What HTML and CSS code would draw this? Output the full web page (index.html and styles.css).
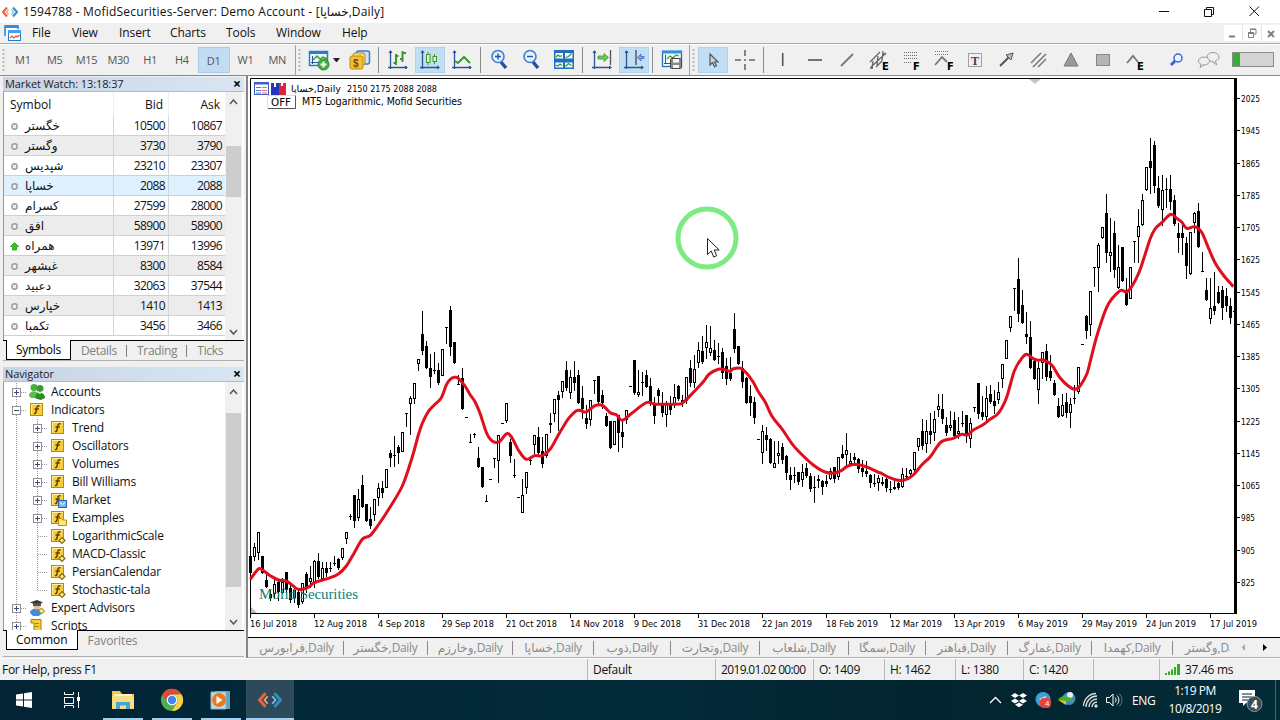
FILE: index.html
```
<!DOCTYPE html>
<html lang="en">
<head>
    <meta charset="UTF-8">
    <title>1594788 - MofidSecurities-Server: Demo Account</title>
    <link rel="stylesheet" href="styles.css">
</head>
<body>

    <!-- shared icons -->
    <svg class="defs">
        <symbol id="logo" viewBox="0 0 16 12">
            <path d="M5 1.5L1 6l4 4.5" fill="none" stroke="#e8643c" stroke-width="2"/>
            <path d="M11 1.5L15 6l-4 4.5" fill="none" stroke="#2f8fc4" stroke-width="2"/>
            <path d="M6.5 3.5L4.3 6l2.200 2.500" fill="none" stroke="#f0a080" stroke-width="1.200"/>
            <path d="M9.500 3.500L11.700 6l-2.200 2.500" fill="none" stroke="#80bde0" stroke-width="1.200"/>
        </symbol>
        <symbol id="trunk" viewBox="0 0 21 18"><path d="M10.5 0v18" class="dots"/></symbol>
        <symbol id="plus" viewBox="0 0 21 18">
            <path d="M10.5 0v18M15 9.500h6" class="dots"/>
            <rect x="6.500" y="5.500" width="8" height="8" fill="#fff" stroke="#919191"/>
            <path d="M8 9.500h5M10.500 7v5" stroke="#3c4c86"/>
        </symbol>
        <symbol id="minus" viewBox="0 0 21 18">
            <path d="M10.5 0v18M15 9.500h6" class="dots"/>
            <rect x="6.500" y="5.500" width="8" height="8" fill="#fff" stroke="#919191"/>
            <path d="M8 9.500h5" stroke="#3c4c86"/>
        </symbol>
        <symbol id="leaf" viewBox="0 0 21 18"><path d="M10.5 0v18M11 9.500h10" class="dots"/></symbol>
        <symbol id="last" viewBox="0 0 21 18"><path d="M10.5 0v9.500h10.500" class="dots"/></symbol>
        <symbol id="fx" viewBox="0 0 18 18">
            <rect x="1.500" y="2.500" width="12" height="12" fill="#f8cf3a" stroke="#b88a10"/>
            <path d="M2.500 13V3.500H13" fill="none" stroke="#ffeb9a"/>
            <path d="M10.500 5c-1.800-.8-2.400.2-2.700 1.800L7 11c-.3 1.500-1 1.800-2 1.300M5.500 8h4.300" fill="none" stroke="#5a3d00" stroke-width="1.400"/>
        </symbol>
        <symbol id="fxc" viewBox="0 0 18 18">
            <use href="#fx"/>
            <path d="M12 10.500l3 3-3 3-3-3z" fill="#ffe680" stroke="#8a6a10" stroke-width="1.200"/>
        </symbol>
        <symbol id="dot" viewBox="0 0 9 9"><circle cx="4.500" cy="4.500" r="2.700" fill="#eee" stroke="#999" stroke-width="1.400"/></symbol>
        <symbol id="up" viewBox="0 0 9 9"><path d="M4.500 .5L8.500 4.500H6.500V8H2.500V4.500H.5z" fill="#3cc21a" stroke="#2a9a10" stroke-width=".8"/></symbol>
        <symbol id="axes" viewBox="0 0 22 22">
            <path d="M3.500 2v18M1 18.500h19" stroke="#2a5496" stroke-width="1.300"/>
            <path d="M3.500 1l2 3h-4zM21 18.500l-3-2v4z" fill="#2a5496"/>
        </symbol>
    </svg>

    <div class="titlebar">
        <svg class="app-logo" width="16" height="12"><use href="#logo"/></svg>
        <span class="title">1594788 - MofidSecurities-Server: Demo Account - [خساپا,Daily]</span>
        <svg class="winbtns" width="110" height="22" fill="none" stroke="#111">
            <path d="M5 10.500h10"/>
            <path d="M50.500 8.500h7v7h-7zM52.500 8.500v-2h7v7h-2"/>
            <path d="M95.500 5.500l9.500 9.500M105 5.500L95.500 15"/>
        </svg>
    </div>

    <div class="menubar">
        <svg width="18" height="16" class="menu-icon">
            <path d="M1 11V1h13v3" fill="#fff" stroke="#1f7fd0" stroke-width="1.500"/>
            <rect x="1" y="0" width="13" height="3" fill="#2f8fe0"/>
            <rect x="4.500" y="5.500" width="12" height="10" fill="#fff" stroke="#1f7fd0"/>
            <rect x="4" y="5" width="13" height="3" fill="#4aa0e8"/>
            <path d="M6 13l2-2 2 2 2-2 1.500 1 2-2" fill="none" stroke="#e0552a" stroke-width="1.200"/>
        </svg>
        <span class="m-file">File</span>
        <span class="m-view">View</span>
        <span class="m-insert">Insert</span>
        <span class="m-charts">Charts</span>
        <span class="m-tools">Tools</span>
        <span class="m-window">Window</span>
        <span>Help</span>
        <div class="mdi">
            <svg width="18" height="16"><path d="M5 11.500h6" stroke="#808080" stroke-width="2"/></svg>
            <svg width="18" height="16" fill="none" stroke="#808080"><path d="M5.500 8.500h5v4h-5zM7.500 8v-3.500h5.500v4.500h-2M5 7.500h6M7 4h6"/></svg>
            <svg width="18" height="16"><path d="M6 6l6 6M12 6l-6 6" stroke="#808080" stroke-width="2"/></svg>
        </div>
    </div>

    <div class="toolbar">
        <div class="grip"></div>
        <div class="frames">
            <span>M1</span><span>M5</span><span>M15</span><span>M30</span><span>H1</span><span>H4</span>
            <span class="on">D1</span><span>W1</span><span>MN</span>
        </div>
        <div class="band"></div>
        <div class="grip"></div>
        <div class="tool"><svg width="22" height="22">
            <rect x="1.500" y="2.500" width="18" height="14" fill="#eaf6ff" stroke="#2a7fc0" stroke-width="1.500"/>
            <path d="M1 3.500h19" stroke="#2a7fc0" stroke-width="3"/>
            <path d="M4.500 7v8M3 13.500h13" stroke="#2a5496"/>
            <path d="M5 11l4-4 3 3 3-2 4 2" fill="none" stroke="#3aa02a" stroke-width="1.500"/>
            <circle cx="15.500" cy="15.500" r="5.500" fill="#3fae3f" stroke="#2a8a2a"/>
            <path d="M15.500 12.500v6M12.500 15.500h6" stroke="#fff" stroke-width="2"/></svg></div>
        <div class="drop"></div>
        <div class="tool"><svg width="22" height="22">
            <rect x="7.500" y="2" width="13" height="13" rx="2" fill="#cfe6fa" stroke="#2f7fc8" stroke-width="1.500"/>
            <rect x="4" y="4" width="12" height="12" rx="2" fill="#f8dc7a" stroke="#b88a1a"/>
            <rect x="1" y="7" width="13" height="13" rx="2" fill="#f4bf30" stroke="#b88a1a"/>
            <text x="4" y="18" class="coin">$</text></svg></div>
        <div class="sep"></div>
        <div class="tool"><svg width="22" height="22"><use href="#axes"/>
            <path d="M9 5v11M15.500 2v11M6.500 14H9M9 7h2.500M13 10h2.500M15.500 4H19" stroke="#3a9a2a" stroke-width="2"/></svg></div>
        <div class="tool on"><svg width="22" height="22"><use href="#axes"/>
            <path d="M9 3v13M15.500 5v10" stroke="#3a9a2a"/>
            <rect x="7.500" y="5.500" width="3.500" height="8" fill="#dff5d0" stroke="#3a9a2a"/>
            <rect x="14" y="7.500" width="3.500" height="5" fill="#dff5d0" stroke="#3a9a2a"/></svg></div>
        <div class="tool"><svg width="22" height="22"><use href="#axes"/>
            <path d="M4 12l3 2 6-6 6 6" fill="none" stroke="#3a9a2a" stroke-width="2"/></svg></div>
        <div class="sep"></div>
        <div class="tool"><svg width="22" height="22">
            <path d="M12 13l5 6" stroke="#2a4f96" stroke-width="3.500"/>
            <circle cx="9" cy="7.500" r="6" fill="#e2f1fd" stroke="#3f7fd0" stroke-width="1.600"/>
            <path d="M9 4.500v6M6 7.500h6" stroke="#2a5496" stroke-width="1.400"/></svg></div>
        <div class="tool"><svg width="22" height="22">
            <path d="M12 13l5 6" stroke="#2a4f96" stroke-width="3.500"/>
            <circle cx="9" cy="7.500" r="6" fill="#e2f1fd" stroke="#3f7fd0" stroke-width="1.600"/>
            <path d="M6 7.500h6" stroke="#2a5496" stroke-width="1.400"/></svg></div>
        <div class="tool"><svg width="22" height="22">
            <rect x="1" y="1" width="20" height="19" fill="#1f6fc0"/>
            <path d="M2.500 4h7.500v5.500H2.500zM12 4h7.500v5.500H12zM2.500 13.500h7.500v5H2.500zM12 13.500h7.500v5H12z" fill="#f2fbff"/>
            <path d="M3 8l2-2 2 1.500 2-1M12.500 8.500l3-1 3-3M3 16l2 1 2-2 2 1.500M12.500 17.500l3-3 3 2" fill="none" stroke="#3a9a2a" stroke-width="1.300"/></svg></div>
        <div class="sep"></div>
        <div class="tool"><svg width="22" height="22"><use href="#axes"/>
            <path d="M19.500 1v15" stroke="#555" stroke-width="1.300"/>
            <path d="M7 7h6V4.500L17.500 8.500 13 12.500V10H7z" fill="#6cc85a" stroke="#3a9a2a" stroke-width=".8"/></svg></div>
        <div class="tool on"><svg width="22" height="22"><use href="#axes"/>
            <path d="M13 1v15" stroke="#444" stroke-width="1.300"/>
            <path d="M21 7.500h-3V5l-3.500 3.500L18 12V9.500h3z" fill="#7aa8e8" stroke="#3a68b8" stroke-width=".8"/></svg></div>
        <div class="sep"></div>
        <div class="tool"><svg width="22" height="22">
            <rect x="1.500" y="2.500" width="19" height="15" fill="#f2fbff" stroke="#1f6fc0" stroke-width="1.300"/>
            <path d="M1 3h20" stroke="#2f8fe0" stroke-width="3"/>
            <path d="M4.500 6v9M3 14.500h6" stroke="#2a5496"/>
            <path d="M6 10l3-3 3 2 3-3 3 1" fill="none" stroke="#3a9a2a" stroke-width="1.300"/>
            <rect x="9.500" y="9.500" width="11" height="10" rx="1" fill="#8a8a8a" stroke="#444"/>
            <path d="M12 10h6v3.500h-6zM12 16h6v3h-6z" fill="#f4f4f4"/></svg></div>
        <div class="band"></div>
        <div class="grip"></div>
        <div class="tool on"><svg width="22" height="22"><path d="M8 5v11l2.500-2.300 2 4 2-1-2-3.700h3.500z" fill="#c8d4de" stroke="#555" stroke-width="1.200"/></svg></div>
        <div class="tool"><svg width="22" height="22"><path d="M11 1v6M11 15v6M1 11h6M15 11h6M10 11h2" stroke="#666" stroke-width="1.600"/></svg></div>
        <div class="sep"></div>
        <div class="tool"><svg width="22" height="22"><path d="M10.700 4v13" stroke="#555" stroke-width="1.600"/></svg></div>
        <div class="tool"><svg width="22" height="22"><path d="M4 11h14" stroke="#555" stroke-width="1.600"/></svg></div>
        <div class="tool"><svg width="22" height="22"><path d="M5 17L17 5" stroke="#777" stroke-width="1.800"/></svg></div>
        <div class="tool"><svg width="22" height="22">
            <path d="M2 13L12 3M3 18L18 4M8 18l6-6M4 20l1-8M9 16l1-9M14 12l1-10M2 19h3M15 5h3" stroke="#666" stroke-width="1.300"/>
            <text x="14" y="21" class="tag">E</text></svg></div>
        <div class="tool"><svg width="22" height="22">
            <path d="M4 3.500h14M4 6.500h14M4 9.500h14M4 13.500h8" stroke="#666" stroke-dasharray="1 1"/>
            <text x="13" y="21" class="tag">F</text></svg></div>
        <div class="tool"><svg width="22" height="22">
            <path d="M3 2.500h13M3 5.500h13" stroke="#777" stroke-dasharray="1 1"/>
            <path d="M3 16l7-8 5 5" fill="none" stroke="#777" stroke-width="1.800"/>
            <text x="15" y="21" class="tag">F</text></svg></div>
        <div class="tool"><svg width="22" height="22">
            <rect x="4.500" y="4.500" width="13" height="13" fill="none" stroke="#555" stroke-dasharray="1 1"/>
            <text x="7" y="16" class="tee">T</text></svg></div>
        <div class="tool"><svg width="22" height="22">
            <path d="M4 17l9-9" stroke="#555" stroke-width="2"/>
            <path d="M17 4l-2 7-5-5z" fill="#bbb" stroke="#555"/></svg></div>
        <div class="tool"><svg width="22" height="22"><path d="M3 14L13 4M5 18L18 5M10 18l8-8" stroke="#777" stroke-width="1.500"/></svg></div>
        <div class="tool"><svg width="22" height="22"><path d="M11 4l7 13H4z" fill="#999" stroke="#777"/></svg></div>
        <div class="tool"><svg width="22" height="22"><rect x="4.500" y="5.500" width="13" height="11" fill="#b5b5b5" stroke="#888"/></svg></div>
        <div class="tool"><svg width="22" height="22">
            <path d="M3 14l6-7 5 6" fill="none" stroke="#777" stroke-width="1.800"/>
            <text x="13" y="21" class="tag">E</text></svg></div>
        <div class="space"></div>
        <div class="tool"><svg width="22" height="22">
            <path d="M9 12l-4 4" stroke="#3a62d8" stroke-width="3"/>
            <circle cx="12" cy="9" r="4" fill="#eef4ff" stroke="#3a62d8" stroke-width="1.500"/></svg></div>
        <div class="tool"><svg width="24" height="22">
            <ellipse cx="16" cy="8" rx="6" ry="4.500" fill="#f0f0f0" stroke="#999"/>
            <path d="M18 12l2 4-5-3.500" fill="#f0f0f0" stroke="#999"/>
            <ellipse cx="7" cy="12" rx="5.500" ry="4" fill="#f0f0f0" stroke="#999"/>
            <path d="M4 15l-1 3.500 4-2.500" fill="#f0f0f0" stroke="#999"/></svg></div>
        <div class="meter"><div class="level"></div></div>
    </div>

    <div class="workspace">
        <div class="side">
            <div class="panel">
                <div class="panel-title"><span>Market Watch: 13:18:37</span><b>×</b></div>
                <div class="panel-body watch">
                    <table>
                        <thead>
                            <tr><th>Symbol</th><th>Bid</th><th>Ask</th></tr>
                        </thead>
                        <tbody>
                            <tr><td><svg><use href="#dot"/></svg>خگستر</td><td>10500</td><td>10867</td></tr>
                            <tr><td><svg><use href="#dot"/></svg>وگستر</td><td>3730</td><td>3790</td></tr>
                            <tr><td><svg><use href="#dot"/></svg>شپدیس</td><td>23210</td><td>23307</td></tr>
                            <tr class="selected"><td><svg><use href="#dot"/></svg>خساپا</td><td>2088</td><td>2088</td></tr>
                            <tr><td><svg><use href="#dot"/></svg>کسرام</td><td>27599</td><td>28000</td></tr>
                            <tr><td><svg><use href="#dot"/></svg>افق</td><td>58900</td><td>58900</td></tr>
                            <tr><td><svg><use href="#up"/></svg>همراه</td><td>13971</td><td>13996</td></tr>
                            <tr><td><svg><use href="#dot"/></svg>غبشهر</td><td>8300</td><td>8584</td></tr>
                            <tr><td><svg><use href="#dot"/></svg>دعبید</td><td>32063</td><td>37544</td></tr>
                            <tr><td><svg><use href="#dot"/></svg>خپارس</td><td>1410</td><td>1413</td></tr>
                            <tr><td><svg><use href="#dot"/></svg>تکمبا</td><td>3456</td><td>3466</td></tr>
                        </tbody>
                    </table>
                    <div class="scroll scroll-watch">
                        <svg width="9" height="6"><path d="M1 5l3.500-4L8 5"/></svg>
                        <div class="thumb"></div>
                        <svg width="9" height="6"><path d="M1 1l3.500 4L8 1"/></svg>
                    </div>
                </div>
                <div class="tabs">
                    <span class="active">Symbols</span><span>Details</span><i></i><span>Trading</span><i></i><span>Ticks</span>
                </div>
            </div>

            <div class="panel navigator">
                <div class="panel-title"><span>Navigator</span><b>×</b></div>
                <div class="panel-body nav">
                    <div class="tree">
                        <div class="row root"><svg><use href="#plus"/></svg><svg class="ico">
                            <circle cx="5" cy="4.500" r="3.500" fill="#4cae3c"/><circle cx="11" cy="5.500" r="3.500" fill="#3c9a30"/>
                            <path d="M0 13c0-6 9-6 10-1l-3 3H2z" fill="#5cbc4c"/><path d="M6 15c0-7 10-7 10 0l-4 2-4-1z" fill="#2f8a28"/>
                            <path d="M9 8l2 3 2-3" stroke="#d8f0c8" fill="none"/></svg><span>Accounts</span></div>
                        <div class="row root"><svg><use href="#minus"/></svg><svg class="ico"><use href="#fx"/></svg><span>Indicators</span></div>
                        <div class="row"><svg><use href="#trunk"/></svg><svg><use href="#plus"/></svg><svg class="ico"><use href="#fx"/></svg><span>Trend</span></div>
                        <div class="row"><svg><use href="#trunk"/></svg><svg><use href="#plus"/></svg><svg class="ico"><use href="#fx"/></svg><span>Oscillators</span></div>
                        <div class="row"><svg><use href="#trunk"/></svg><svg><use href="#plus"/></svg><svg class="ico"><use href="#fx"/></svg><span>Volumes</span></div>
                        <div class="row"><svg><use href="#trunk"/></svg><svg><use href="#plus"/></svg><svg class="ico"><use href="#fx"/></svg><span>Bill Williams</span></div>
                        <div class="row"><svg><use href="#trunk"/></svg><svg><use href="#plus"/></svg><svg class="ico"><use href="#fx"/>
                            <rect x="8.500" y="9.500" width="8" height="7" fill="#7ab8f0" stroke="#2468b8"/><path d="M10 11.500l2.500 2 2.500-2" fill="none" stroke="#fff"/></svg><span>Market</span></div>
                        <div class="row"><svg><use href="#trunk"/></svg><svg><use href="#plus"/></svg><svg class="ico"><use href="#fx"/>
                            <path d="M8.500 16.500v-7h3l1 1.500h4v5.500z" fill="#ffe680" stroke="#b8921a"/></svg><span>Examples</span></div>
                        <div class="row"><svg><use href="#trunk"/></svg><svg><use href="#leaf"/></svg><svg class="ico"><use href="#fxc"/></svg><span>LogarithmicScale</span></div>
                        <div class="row"><svg><use href="#trunk"/></svg><svg><use href="#leaf"/></svg><svg class="ico"><use href="#fxc"/></svg><span>MACD-Classic</span></div>
                        <div class="row"><svg><use href="#trunk"/></svg><svg><use href="#leaf"/></svg><svg class="ico"><use href="#fxc"/></svg><span>PersianCalendar</span></div>
                        <div class="row"><svg><use href="#trunk"/></svg><svg><use href="#last"/></svg><svg class="ico"><use href="#fxc"/></svg><span>Stochastic-tala</span></div>
                        <div class="row root"><svg><use href="#plus"/></svg><svg class="ico">
                            <path d="M1 14c0-6 12-6 12 0l-3 3H4z" fill="#3f8fd8"/><circle cx="8" cy="7" r="3.500" fill="#e8c090"/>
                            <path d="M1 3.500L8 1l6 2.500L8 6z" fill="#333"/><path d="M4 4h8v3H4z" fill="#555"/>
                            <path d="M12.500 9l3 3-3 3-3-3z" fill="#ffe680" stroke="#8a6a10"/></svg><span>Expert Advisors</span></div>
                        <div class="row root"><svg><use href="#plus"/></svg><svg class="ico">
                            <path d="M2 2.500h10v10l3 2.500H5V6H2z" fill="#f8cf3a" stroke="#a87f10"/><path d="M6 6.500h4M6 9.500h4" stroke="#a87f10"/></svg><span>Scripts</span></div>
                    </div>
                    <div class="scroll scroll-nav">
                        <svg width="9" height="6"><path d="M1 5l3.500-4L8 5"/></svg>
                        <div class="thumb"></div>
                        <svg width="9" height="6"><path d="M1 1l3.500 4L8 1"/></svg>
                    </div>
                </div>
                <div class="tabs">
                    <span class="active common">Common</span><span>Favorites</span>
                </div>
            </div>
        </div>

        <div class="main">
            <svg id="chart" width="1032" height="560" viewBox="248 77 1032 560">
                <path d="M250.500 613V78.500H1237" class="frame"/>
                <path d="M250 613.500H1236" class="frame"/>
                <rect x="1234" y="79" width="3" height="535"/>
                <path d="M1029 79h12l-6 5z" fill="#c4c4c4"/>
                <path d="M251 607v6h6z" fill="#bbb"/>
                <g id="bars"></g>
                <text x="259" y="599" class="mark" textLength="99">Mofid Securities</text>
                <path id="average"/>
                <g id="scale"></g>

                <rect x="254.500" y="82.500" width="14" height="12" fill="#fff" stroke="#3f5fc0"/>
                <path d="M254 83.500h15" stroke="#3f5fc0" stroke-width="2"/>
                <path d="M256 87.500h5M256 90.500h5M256 93h5" stroke="#5878d0"/><path d="M262 87.500h5M262 90.500h5M262 93h5" stroke="#e07080"/>
                <path d="M271 83h3v4h2v-4h3v12h-8z" fill="#2038c0"/><path d="M279 83h2v3h2v-3h3v12h-7z" fill="#d82838"/>
                <text x="291" y="92" class="head" textLength="50" lengthAdjust="spacingAndGlyphs">خساپا,Daily</text>
                <text x="347" y="92" class="head" textLength="90" lengthAdjust="spacingAndGlyphs">2150 2175 2088 2088</text>
                <path d="M267.500 108.500v-13h28" stroke="#ddd" fill="none"/>
                <path d="M268 108.500h27.500v-13" stroke="#555" fill="none"/>
                <text x="271" y="106" class="note" textLength="20" lengthAdjust="spacingAndGlyphs">OFF</text>
                <text x="302" y="105" class="note" textLength="160" lengthAdjust="spacingAndGlyphs">MT5 Logarithmic, Mofid Securities</text>

                <circle cx="707" cy="238" r="29" class="click"/>
                <path d="M707.500 238.500v16l3.700-3.500 2.500 6 3-1.300-2.500-5.700h5z" fill="#fff" stroke="#222"/>
            </svg>
            <div class="chart-tabs">
                <span>فرابورس,Daily</span><span>خگستر,Daily</span><span>وخارزم,Daily</span><span>خساپا,Daily</span>
                <span>ذوب,Daily</span><span>وتجارت,Daily</span><span>شلعاب,Daily</span><span>سمگا,Daily</span>
                <span>فباهنر,Daily</span><span>غمارگ,Daily</span><span>کهمدا,Daily</span><span class="cut">وگستر,Daily</span>
                <svg width="48" height="18"><path d="M15 5v7l-3.500-3.500z" fill="#aaa"/><path d="M33 5v7l4-3.500z"/></svg>
            </div>
        </div>
    </div>

    <div class="status">
        <span>For Help, press F1</span>
        <span>Default</span>
        <span class="time">2019.01.02 00:00</span>
        <span>O: 1409</span>
        <span>H: 1462</span>
        <span>L: 1380</span>
        <span>C: 1420</span>
        <span></span>
        <span class="ping"><svg width="16" height="12" fill="#2fae1a"><path d="M0 9h2v2H0zM3 7.500h2V11H3zM6 5.500h2V11H6zM9 3h2v8H9zM12 0h3v11h-3z"/></svg>37.46 ms</span>
    </div>

    <div class="taskbar">
        <div class="app"><svg width="16" height="16" fill="#fff"><path d="M0 2.500L7 1.500V7.500H0zM8 1.300L16 0v7.500H8zM0 8.500h7v6L0 13.500zM8 8.500h8V16l-8-1.200z"/></svg></div>
        <div class="app"><svg width="18" height="16" fill="none" stroke="#fff"><path d="M1.500 0v2.500h9V0M1.500 5.500h9v6h-9zM1.500 16v-2.500h9V16M15.500 0v16"/><path d="M14 5h3v4h-3z" fill="#fff" stroke="none"/></svg></div>
        <div class="app run first"><svg width="22" height="20">
            <path d="M0 1h8l2 3h12v14H0z" fill="#f4c64e"/><path d="M2 4h18v3H2z" fill="#fff3c0"/><path d="M0 6h22v13H0z" fill="#fbdc84"/>
            <path d="M4 19v-7h14v7h-4v-3.500H8V19z" fill="#3fa8d8"/></svg></div>
        <div class="app run"><svg width="24" height="24" viewBox="-12 -12 24 24">
            <circle r="11" fill="#4caf50"/>
            <path d="M-9.600-5.500A11 11 0 0 1 9.600-5.500H0A5.500 5.500 0 0 0-4.800 2.800z" fill="#e04a3a"/>
            <path d="M9.600-5.500A11 11 0 0 1 0 11L4.800 2.800A5.500 5.500 0 0 0 0-5.500z" fill="#fcd03c"/>
            <circle r="5.300" fill="#fff"/><circle r="4.200" fill="#4285f4"/></svg></div>
        <div class="app run"><svg width="22" height="20">
            <path d="M5 1h15v18H5z" fill="#5fa4c8"/><path d="M1 2h15v17H1z" fill="#bcdcea" stroke="#7fb4cc"/>
            <circle cx="9" cy="10" r="7" fill="#e87a22"/><path d="M6.500 6v8l6-4z" fill="#fff"/></svg></div>
        <div class="app run current"><svg width="24" height="18"><use href="#logo"/></svg></div>
        <div class="tray">
            <svg width="24" height="20"><path d="M7 13l5.500-5.500L18 13" fill="none" stroke="#fff" stroke-width="1.300"/></svg>
            <svg width="24" height="20" fill="#fff"><path d="M8 3l4 2.500-4 2.500-4-2.500zM16 3l4 2.500-4 2.500-4-2.500zM8 8.500l4 2.500-4 2.500L4 11zM16 8.500l4 2.500-4 2.500-4-2.500zM12 12.500l4 2.300-4 2.400-4-2.400z"/></svg>
            <svg width="24" height="20"><circle cx="12" cy="9.500" r="7.500" fill="#3f9fd8"/><path d="M8 9l7-3-2 7" fill="#d8ecf8"/><rect x="9" y="8" width="11" height="10" rx="4" fill="#e8403a"/><text x="14" y="16" class="badge">4</text></svg>
            <svg width="24" height="20"><circle cx="14" cy="8.500" r="6.500" fill="#3f88d0"/><circle cx="15" cy="5" r="3" fill="#e8f0f4"/><path d="M3 9l8-5v3c5 0 8 2 8 6-3-2-5-2-8-1v3z" fill="#48b030"/><path d="M3 10l8 5v-4z" fill="#e8c020"/></svg>
            <svg width="24" height="20" fill="none" stroke="#ddd" stroke-width="1.300"><path d="M7 17A11 11 0 0 1 18 6M10 17a8 8 0 0 1 8-8M13 17a5 5 0 0 1 5-5M4.500 16A13 13 0 0 1 17 3.500"/><circle cx="17" cy="16" r="1" fill="#ddd"/></svg>
            <svg width="24" height="20" fill="none" stroke="#fff"><path d="M3.500 7.500h3l3.500-3.500v12l-3.500-3.500h-3zM12 7.500c1.500 1.500 1.500 3.500 0 5M14 5.500c2.500 2.500 2.500 6.500 0 9"/><path d="M16 3.500c4 4 4 9 0 13" stroke="#5a7582"/></svg>
            <span class="lang">ENG</span>
            <span class="clock">1:19 PM<br>10/8/2019</span>
            <svg width="30" height="30"><path d="M3 5h16v13h-9l-3 3v-3H3z" fill="#fff"/><path d="M6 9h10M6 12h10M6 15h6" stroke="#02202c"/>
                <circle cx="18.500" cy="19" r="7.500" fill="#3a4d57" stroke="#8a979e"/><text x="18.500" y="23.500" class="count">4</text></svg>
            <div class="peek"></div>
        </div>
    </div>

    <script>
        // Each bar: type (f = filled, h = hollow), high, body top, body bottom, low.
        // Values are in thirds of a pixel below the section's base line.
        const sections = [
            { base: 280, bars: `f 828 828 880 880,h 790 800 828 840,h 755 755 815 838,f 828 828 880 880,f 885 900 922 922,
                f 930 942 955 960,h 900 912 940 955,f 900 905 935 960,h 895 905 935 940,f 877 877 930 935,
                f 905 925 960 965,h 925 930 950 965,f 930 935 975 980,h 908 910 962 968,f 877 882 925 935,
                h 858 895 902 920,h 840 842 905 922,f 820 842 892 895,h 845 865 895 900,f 845 865 880 888,
                f 845 864 864 872,f 828 848 848 855,f 835 838 865 868,h 805 805 830 838,h 757 757 773 790,
                f 703 708 708 718,f 645 645 722 742,h 628 658 712 720,f 585 615 680 680,f 672 672 722 722,
                f 680 717 738 745,h 657 657 703 720,h 610 625 650 675,f 603 623 640 652,h 568 568 622 622,
                f 510 518 535 558,f 468 526 529 557,f 495 502 520 548,h 455 455 512 512,f 398 398 398 437,
                h 348 355 368 462,h 310 310 355 368,h 238 238 248 270,f 93 162 212 222,f 182 198 265 265,
                f 222 265 290 320,f 215 270 273 280,f 250 270 310 312,h 208 208 286 286,f 140 140 140 190,
                f 78 90 200 225,f 187 187 250 250,f 285 312 312 312,f 263 295 388 388,f 412 412 412 412,
                f 463 487 487 487,f 460 463 466 470,f 500 535 560 560,f 560 560 622 622,f 645 663 663 663,
                f 598 598 598 598,f 535 535 535 562,h 465 465 540 605,f 430 430 430 430,h 370 370 420 425,
                f 478 485 527 545,f 538 585 588 590,f 652 652 652 652,h 598 645 697 697,h 577 577 622 640,
                f 530 540 540 552,h 465 465 493 520,f 440 470 520 525,f 470 512 552 560,h 463 463 525 532,
                f 400 430 436 455,h 358 358 400 422,f 333 345 360 450,h 303 303 332 350,f 242 270 325 330,
                h 270 292 335 355,f 242 290 308 330,f 270 285 370 370,f 318 355 388 415,f 375 413 433 445,
                h 360 360 418 435,f 300 300 300 340,f 288 288 365 375,f 330 345 370 385,f 400 408 437 437,
                f 423 423 503 503,h 423 423 493 493,f 405 405 458 512,f 422 457 470 500,h 390 390 418 430,
                f 319 319 319 319,f 240 240 340 343,h 270 335 343 348,f 275 306 310 345,f 270 285 320 320,
                f 295 318 372 375,f 350 372 407 428,f 325 330 348 365,f 337 375 398 408,h 363 372 403 437,
                f 347 372 390 403,h 312 352 368 380,f 315 318 358 360,f 345 360 368 378,h 290 290 360 368,
                f 240 265 308 318,h 225 268 307 322,h 187 210 245 260,f 168 213 245 248,h 135 187 200 235,
                h 138 205 215 225,f 180 210 240 240,f 190 229 229 250,f 205 217 278 295,f 235 258 297 312,
                f 232 278 297 300,f 100 148 207 215,f 198 198 253 253,f 243 265 305 320,f 290 295 368 370,
                f 315 348 368 405,f 352 367 413 428,f 478 478 478 478,h 435 453 515 548,f 440 465 480 510,
                f 475 477 548 548,h 482 550 560 560,h 482 518 525 550,f 488 502 540 550,f 525 528 580 598,
                f 560 585 600 628,f 560 586 586 605,f 575 577 607 612,h 553 575 597 618,f 550 563 587 590,
                f 580 587 628 632,f 587 621 621 665,f 585 598 602 622,f 600 602 622 643,f 585 603 613 618,
                h 565 572 595 598,f 560 562 598 605,h 532 532 588 598,f 495 523 533 535,h 458 510 523 555,
                h 518 542 550 552,f 520 532 540 550,f 535 538 568 575,f 540 565 575 587,f 542 573 583 587,
                f 583 585 610 622,f 582 610 610 618,h 585 595 605 630,f 590 605 611 615,f 590 597 623 633,
                f 603 628 628 635,f 600 622 626 628,f 605 610 625 628` },
            { base: 400, bars: `h 205 223 257 260,f 205 228 232 235,h 208 210 218 228,h 157 157 208 215,h 115 115 137 150,
                f 57 93 138 148,h 60 93 130 155,f 40 93 105 128,h 32 57 95 120` },
            { base: 110, bars: `h 852 888 898 918,f 852 897 927 940,f 920 945 968 975,h 903 946 952 960,f 905 930 978 985,
                h 922 963 970 985,f 903 940 943 948,f 915 915 978 995,h 925 940 985 1011,f 890 890 890 903,
                f 820 820 913 925,f 857 905 922 928,h 828 865 917 930,f 825 853 875 880,f 840 873 887 908,
                h 817 845 867 880,h 763 763 805 830,h 690 690 745 745,h 618 618 650 662,f 535 535 535 600,
                f 443 507 613 632,f 540 585 638 638,f 605 673 680 700,f 633 682 773 773,f 745 752 808 808,
                h 755 773 837 880,h 727 727 755 803,f 703 723 800 810,f 735 783 803 810,f 810 820 855 855,
                f 865 888 922 922,h 852 885 915 918,f 850 877 910 920,h 865 882 907 952,f 825 864 868 878,
                h 772 772 842 850,f 703 703 703 703,f 615 618 662 685,h 542 542 643 675,f 470 470 470 527,
                h 400 405 470 542,h 352 352 380 383,f 252 310 430 455,h 325 425 435 483,f 333 370 480 500,
                h 405 470 530 533,f 410 412 512 512,f 503 540 585 585,h 470 470 563 565,f 392 392 392 455,
                h 298 347 377 455,h 253 270 343 345,h 172 172 238 240,f 83 153 175 250,f 93 105 227 245,
                f 198 233 287 290,h 195 240 298 345,f 203 238 241 290,f 195 237 275 298,f 255 270 343 345,
                f 340 370 385 425,f 340 370 383 433,f 380 400 467 503,h 365 367 490 492,h 305 310 335 365,
                f 280 303 410 410,f 425 482 482 482,f 505 540 570 570,h 505 595 625 638,f 487 588 602 613,
                f 528 545 578 580,f 528 540 595 628,f 535 558 588 602,f 565 588 623 638,f 603 603 603 603` }
        ];

        // Moving average: x, y pairs, same thirds unit, from each section's origin.
        const average = [
            { x: 245, y: 280, points: `16 898 40 867 52 870 76 887 100 900 124 903 145 918 160 928 190 922 208 908 250 895 280 882
                304 858 328 818 352 778 376 766 400 735 436 680 472 618 496 550 508 510 520 465 532 430 550 395 568 375
                588 355 604 315 616 298 628 292 640 295 660 318 676 345 690 365 705 400 725 460 738 480 750 487 765 484
                785 461 800 472 822 513 844 538 868 527 892 527 916 507 940 465 964 425` },
            { x: 570, y: 280, points: `0 410 18 393 30 391 49 396 73 378 97 376 121 398 140 405 157 421 185 400 229 368 253 372
                289 373 325 372 340 367 375 332 400 305 418 282 445 268 465 269 481 274 490 266 512 265 530 280 550 307
                566 337 585 365 607 410 637 448 665 490 690 518 730 555 765 576 793 579 815 571 830 560 855 553 890 561
                925 577` },
            { x: 880, y: 400, points: `0 218 30 233 55 241 79 238 100 225 125 195 151 170 183 126 220 115` },
            { x: 880, y: 110, points: `245 973 263 975 280 960 308 945 330 928 350 915 365 895 380 862 392 820 403 783 420 752
                439 733 460 746 475 751 490 750 515 765 540 803 565 828 585 838 600 828 620 793 633 745 647 690 665 632
                680 592 697 565 722 541 740 546 755 530 775 492 790 450 810 388 825 357 845 338 872 313 890 325 905 336
                920 355 945 350 965 367 985 413 1005 458 1030 495 1060 530` }
        ];

        const dates = ['16 Jul 2018', '12 Aug 2018', '4 Sep 2018', '29 Sep 2018', '21 Oct 2018', '14 Nov 2018', '9 Dec 2018',
            '31 Dec 2018', '22 Jan 2019', '18 Feb 2019', '12 Mar 2019', '13 Apr 2019', '6 May 2019', '29 May 2019',
            '24 Jun 2019', '17 Jul 2019'];
        const dateWidths = [47, 53, 47, 52, 51, 54, 47, 52, 50, 52, 52, 51, 50, 55, 50, 47];

        function drawBars() {
            let x = 250;
            let html = '';
            sections.forEach(section => {
                section.bars.split(',').forEach(bar => {
                    const [type, ...v] = bar.trim().split(' ');
                    const [high, top, bottom, low] = v.map(n => Math.round(section.base + n / 3));
                    html += `<rect x="${x}" y="${high}" width="1" height="${low - high + 1}"/>`;
                    if (type === 'h') {
                        html += `<rect x="${x - 0.5}" y="${top + 0.5}" width="2" height="${Math.max(bottom - top, 2)}" class="hollow"/>`;
                    } else {
                        html += `<rect x="${x - 1}" y="${top}" width="3" height="${Math.max(bottom - top, 1)}"/>`;
                    }
                    x += 4;
                });
            });
            document.getElementById('bars').innerHTML = html;
        }

        function drawAverage() {
            const p = [];
            average.forEach(part => {
                const n = part.points.trim().split(/\s+/).map(Number);
                for (let i = 0; i < n.length; i += 2) {
                    p.push([part.x + n[i] / 3, part.y + n[i + 1] / 3]);
                }
            });
            // smooth the line through its points
            let d = `M${p[0][0].toFixed(1)} ${p[0][1].toFixed(1)}`;
            for (let i = 0; i < p.length - 1; i++) {
                const a = p[i - 1] || p[i];
                const b = p[i];
                const c = p[i + 1];
                const e = p[i + 2] || c;
                const curve = [
                    b[0] + (c[0] - a[0]) / 6, b[1] + (c[1] - a[1]) / 6,
                    c[0] - (e[0] - b[0]) / 6, c[1] - (e[1] - b[1]) / 6,
                    c[0], c[1]
                ];
                d += 'C' + curve.map(v => v.toFixed(1)).join(' ');
            }
            document.getElementById('average').setAttribute('d', d);
        }

        function drawScale() {
            let html = '';
            for (let i = 0; i <= 15; i++) {
                const y = Math.round(98 + i * 32.25);
                const price = 2025 - i * 80;
                html += `<rect x="1237" y="${y}" width="3" height="1"/>`;
                html += `<text x="1241" y="${y + 4}" textLength="${price > 999 ? 19 : 14}" lengthAdjust="spacingAndGlyphs">${price}</text>`;
            }
            dates.forEach((date, i) => {
                const x = 250 + i * 64;
                html += `<rect x="${x}" y="614" width="1" height="4"/>`;
                html += `<text x="${x}" y="627" textLength="${dateWidths[i]}" lengthAdjust="spacingAndGlyphs">${date}</text>`;
            });
            document.getElementById('scale').innerHTML = html;
        }

        drawBars();
        drawAverage();
        drawScale();
    </script>

</body>
</html>
```
FILE: styles.css
```
* {
    box-sizing: border-box;
}
body {
    margin: 0;
    width: 1280px;
    height: 720px;
    overflow: hidden;
    display: flex;
    flex-direction: column;
    background-color: #f0f0f0;
    color: #111;
    font-family: "Open Sans", "DejaVu Sans", sans-serif;
    font-size: 12px;
    white-space: nowrap;
}
svg {
    display: block;
    flex: none;
}
.defs {
    position: absolute;
    width: 0;
    height: 0;
}
.dots {
    fill: none;
    stroke: #999;
    stroke-dasharray: 1 1;
}

/* title and menu */
.titlebar {
    height: 23px;
    background-color: #fff;
    display: flex;
    align-items: center;
    padding-left: 2px;
}
.title {
    margin-left: 5px;
    letter-spacing: 0.2px;
}
.winbtns {
    margin-left: auto;
    margin-right: 16px;
}
.menubar {
    height: 21px;
    display: flex;
    align-items: center;
    padding-left: 4px;
    padding-bottom: 1px;
    border-bottom: 1px solid #a8a8a8;
    letter-spacing: -0.1px;
}
.menu-icon {
    margin-right: 10px;
}
.m-file { width: 40px; }
.m-view { width: 47px; }
.m-insert { width: 51px; }
.m-charts { width: 56px; }
.m-tools { width: 50px; }
.m-window { width: 66px; }
.mdi {
    margin-left: auto;
    display: flex;
    gap: 1px;
    background-color: #e4e4e4;
}
.mdi svg {
    background-color: #fff;
}

/* toolbar */
.toolbar {
    height: 32px;
    display: flex;
    align-items: center;
    padding-bottom: 1px;
    border-top: 1px solid #fff;
    border-bottom: 1px solid #8a8a8a;
}
.grip {
    width: 3px;
    height: 24px;
    margin: 0 2px;
    background-image: radial-gradient(circle, #b4b4b4 1px, transparent 1.2px);
    background-size: 3px 4px;
}
.frames {
    display: flex;
    width: 287px;
}
.frames span {
    width: 31.8px;
    height: 26px;
    line-height: 26px;
    text-align: center;
    font-size: 11px;
    letter-spacing: -0.3px;
    color: #555;
}
.frames .on {
    background-color: #c2dcf2;
    border: 1px solid #a8cdec;
    line-height: 26px;
}
.band {
    width: 1px;
    height: 30px;
    background-color: #a0a0a0;
    margin-left: 1px;
}
.tool {
    width: 32px;
    height: 26px;
    display: flex;
    align-items: center;
    justify-content: center;
    border: 1px solid transparent;
}
.tool.on {
    width: 30px;
    margin: 0 1px;
    background-color: #c2def4;
    border-color: #b0d4f0;
}
.drop {
    width: 7px;
    margin: 0 4px 0 -2px;
    border: 3.5px solid transparent;
    border-top: 4px solid #222;
    border-bottom: 0;
}
.sep {
    width: 1px;
    height: 26px;
    margin: 0 3px 0 2px;
    background-color: #8c8c8c;
}
.space {
    width: 10px;
}
.coin {
    font: bold 10px "Liberation Sans", sans-serif;
    fill: #7a4a00;
}
.tag {
    font: bold 10px "DejaVu Sans", sans-serif;
    fill: #000;
}
.tee {
    font: bold 12px "Liberation Serif", serif;
    fill: #444;
}
.meter {
    width: 42px;
    height: 15px;
    margin-left: 7px;
    border: 1px solid #8a8a8a;
    background-color: #d4d4d4;
}
.level {
    width: 7px;
    height: 13px;
    background-color: #35b035;
}

/* side panels */
.workspace {
    display: flex;
    height: 582px;
}
.side {
    width: 248px;
    border-right: 2px solid #868686;
    padding: 1px 3px 0 3px;
}
.panel {
    width: 241px;
    height: 284px;
    border-bottom: 1px solid #b0b0b0;
}
.panel-title {
    height: 14px;
    display: flex;
    align-items: center;
    justify-content: space-between;
    padding: 0 3px 0 2px;
    background: linear-gradient(90deg, #c8d4e4, #d8e6f4);
    font-size: 11px;
    line-height: 14px;
    color: #222;
    letter-spacing: -0.1px;
}
.panel-title b {
    font-size: 14px;
    color: #000;
}
.panel-body {
    display: flex;
    border-left: 1px solid #999;
    border-top: 1px solid #b8b8b8;
    background-color: #fff;
    overflow: hidden;
}
.watch {
    height: 249px;
}
table {
    align-self: flex-start;
    width: 221px;
    border-collapse: separate;
    border-spacing: 0;
    table-layout: fixed;
}
th {
    height: 24px;
    padding: 0 5px 0 0;
    font-weight: 400;
    text-align: right;
    border-right: 1px solid #eee;
}
th:first-child {
    width: 110px;
    padding-left: 6px;
    text-align: left;
}
th:nth-child(2) {
    width: 55px;
}
td {
    height: 20px;
    padding: 0 3px 0 0;
    text-align: right;
    line-height: 19px;
    letter-spacing: -0.6px;
    border-right: 1px solid #d4d4d4;
    border-bottom: 1px solid #d0d0d0;
}
td:first-child {
    padding-left: 6px;
    text-align: left;
    letter-spacing: 0;
}
td:last-child, th:last-child {
    border-right: 0;
}
td svg {
    display: inline-block;
    width: 9px;
    height: 9px;
    margin-right: 6px;
    vertical-align: -1px;
}
tbody tr:nth-child(even) {
    background-color: #ececec;
}
tbody tr.selected {
    background-color: #dff0ff;
}
.scroll {
    width: 17px;
    display: flex;
    flex-direction: column;
    align-items: center;
    background-color: #f0f0f0;
    padding: 7px 0 5px;
}
.scroll path {
    fill: none;
    stroke: #555;
    stroke-width: 1.5;
}
.thumb {
    width: 15px;
    background-color: #cdcdcd;
}
.scroll svg:last-child {
    margin-top: auto;
}
.scroll-watch .thumb {
    height: 51px;
    margin-top: 41px;
}
.scroll-nav .thumb {
    height: 174px;
    margin-top: 18px;
}
.tabs {
    height: 20px;
    display: flex;
    align-items: flex-start;
    border-top: 1px solid #000;
    padding-left: 3px;
    color: #808080;
    line-height: 19px;
    letter-spacing: -0.3px;
}
.tabs span {
    padding: 0 9px 0 10px;
}
.tabs .active {
    height: 20px;
    margin-top: -1px;
    padding: 0 9px;
    border: 1px solid #000;
    border-top: 0;
    background-color: #fff;
    color: #000;
    line-height: 20px;
}
.tabs i {
    width: 1px;
    height: 12px;
    margin-top: 4px;
    background-color: #808080;
}
.navigator {
    margin-top: 6px;
    height: 290px;
}
.nav {
    height: 249px;
}
.navigator .tabs .active {
    letter-spacing: 0;
}
.navigator .tabs {
    letter-spacing: -0.1px;
}
.tree {
    width: 221px;
    padding-top: 1px;
}
.row {
    height: 18px;
    display: flex;
    align-items: center;
    padding-left: 2px;
    line-height: 18px;
    letter-spacing: -0.2px;
}
.row svg {
    width: 21px;
    height: 18px;
}
.row .ico {
    width: 18px;
    margin: 0 4px 0 2px;
}

/* chart */
.main {
    width: 1032px;
    padding-top: 1px;
    background-color: #fff;
}
.frame {
    fill: none;
    stroke: #000;
}
.hollow {
    fill: #fff;
    stroke: #000;
}
#average {
    fill: none;
    stroke: #e00f1e;
    stroke-width: 3;
    stroke-linejoin: round;
}
#scale text, .head {
    font-family: "DejaVu Sans", sans-serif;
    font-size: 9px;
}
.mark {
    font-family: "Liberation Serif", serif;
    font-size: 15px;
    fill: #10807c;
}
.note {
    font-family: "DejaVu Sans", sans-serif;
    font-size: 10px;
}
.click {
    fill: none;
    stroke: #7eea84;
    stroke-width: 5;
}
.chart-tabs {
    height: 21px;
    display: grid;
    grid-template-columns: 94px 84px 85px 81px 77px 89px 89px 77px 82px 84px 81px 57px 48px;
    padding-left: 2px;
    border-top: 1px solid #000;
    border-bottom: 1px solid #b0b0b0;
    background-color: #f0f0f0;
    color: #8a8a8a;
    align-items: center;
}
.chart-tabs span {
    height: 14px;
    line-height: 14px;
    text-align: center;
    border-right: 1px solid #888;
    letter-spacing: -0.35px;
}
.chart-tabs .cut {
    padding-left: 12px;
    text-align: left;
    border: 0;
    overflow: hidden;
}

/* status bar */
.status {
    height: 22px;
    display: grid;
    grid-template-columns: 587px 128px 98px 71px 71px 68px 70px 66px 121px;
    line-height: 21px;
    border-top: 1px solid #fff;
    letter-spacing: -0.3px;
}
.status span {
    padding-left: 5px;
    border-left: 1px solid #b8b8b8;
}
.status span:first-child {
    padding-left: 2px;
    border: 0;
}
.status .time {
    letter-spacing: -0.65px;
}
.status .ping {
    display: flex;
    gap: 4px;
}
.ping svg {
    margin-top: 5px;
}

/* taskbar */
.taskbar {
    height: 40px;
    display: flex;
    background: linear-gradient(90deg, #022434, #032b3a 50%, #02242e 72%, #032c38);
    color: #fff;
}
.app {
    width: 48px;
    display: flex;
    align-items: center;
    justify-content: center;
}
.app.run {
    margin-right: 1px;
    background: linear-gradient(#9fd0f4, #9fd0f4) center bottom / 40px 2px no-repeat;
}
.app.first {
    margin-left: 3px;
}
.app.current {
    background-color: #2c4a5a;
    background-size: 48px 2px;
}
.tray {
    margin-left: auto;
    display: flex;
    align-items: center;
}
.badge {
    font: 8px "Liberation Sans", sans-serif;
    fill: #fff;
}
.lang {
    width: 33px;
    padding-left: 5px;
    letter-spacing: -0.3px;
}
.clock {
    width: 70px;
    text-align: center;
    line-height: 18px;
    letter-spacing: -0.45px;
}
.tray svg:last-of-type {
    margin-left: 6px;
}
.count {
    font: bold 12px "Open Sans", sans-serif;
    fill: #fff;
    text-anchor: middle;
}
.peek {
    width: 1px;
    height: 40px;
    margin: 0 4px 0 9px;
    background-color: #4a626c;
}
```
